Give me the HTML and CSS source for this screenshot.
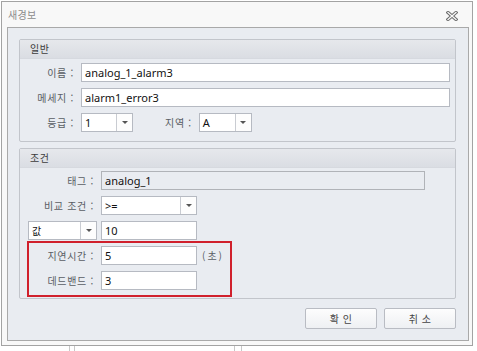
FILE: index.html
```html
<!DOCTYPE html>
<html lang="ko">
<head>
<meta charset="utf-8">
<link rel="stylesheet" href="styles.css">
</head>
<body>
<div class="window">
  <div class="titlebar">
    <span class="title">새경보</span>
    <svg class="close" width="12" height="10" viewBox="0 0 12 10">
      <path d="M2 1.5 L10 8.5 M10 1.5 L2 8.5" stroke="#6a6a6a" stroke-width="3.2" stroke-linecap="square" fill="none"/>
      <path d="M2 1.5 L10 8.5 M10 1.5 L2 8.5" stroke="#f8f8f8" stroke-width="1.3" stroke-linecap="square" fill="none"/>
    </svg>
  </div>
  <div class="panel">
    <section class="group g-general">
      <div class="ghead">일반</div>
      <div class="gbody">
        <div class="row">
          <label class="lbl">이름 :</label>
          <div class="input grow">analog_1_alarm3</div>
        </div>
        <div class="row">
          <label class="lbl">메세지 :</label>
          <div class="input grow">alarm1_error3</div>
        </div>
        <div class="row">
          <label class="lbl">등급 :</label>
          <div class="combo c-grade"><span class="val">1</span><span class="btn"><i class="tri"></i></span></div>
          <label class="lbl2">지역 :</label>
          <div class="combo c-area"><span class="val">A</span><span class="btn"><i class="tri"></i></span></div>
        </div>
      </div>
    </section>
    <section class="group g-cond">
      <div class="ghead">조건</div>
      <div class="gbody">
        <div class="row">
          <label class="lbl">태그 :</label>
          <div class="input disabled w-tag">analog_1</div>
        </div>
        <div class="row">
          <label class="lbl">비교 조건 :</label>
          <div class="combo c-cmp"><span class="val">&gt;=</span><span class="btn"><i class="tri"></i></span></div>
        </div>
        <div class="row">
          <div class="combo c-val"><span class="val kr">값</span><span class="btn"><i class="tri"></i></span></div>
          <div class="input w-num">10</div>
        </div>
        <div class="highlight">
          <div class="row">
            <label class="lbl">지연시간 :</label>
            <div class="input w-num">5</div>
            <span class="unit">(초)</span>
          </div>
          <div class="row">
            <label class="lbl">데드밴드 :</label>
            <div class="input w-num">3</div>
          </div>
        </div>
      </div>
    </section>
    <div class="buttons">
      <button class="button">확 인</button>
      <button class="button">취 소</button>
    </div>
  </div>
</div>
<div class="backdrop">
  <span class="mark m1"></span>
  <span class="mark m2"></span>
</div>
</body>
</html>
```

FILE: styles.css
```css
* { box-sizing: border-box; }
html, body { margin: 0; padding: 0; background: #ffffff; }
body {
  width: 477px;
  height: 351px;
  overflow: hidden;
  font-family: "Noto Sans CJK KR", "Noto Sans", sans-serif;
}

.window {
  margin: 1px 0 0 1px;
  width: 472px;
  height: 345px;
  border: 1px solid #a3a3a3;
  background: #f8f8f8;
  display: flex;
  flex-direction: column;
}

.titlebar {
  height: 25px;
  display: flex;
  align-items: center;
  justify-content: space-between;
  padding: 0 14px 0 6px;
}
.title {
  font-size: 10px;
  color: #8c8c8c;
  line-height: 1;
  letter-spacing: 0.3px;
}
.close { display: block; margin-top: 2px; }

.panel {
  margin: 0 3px 3px 5px;
  height: 314px;
  border: 1px solid #a9a9a9;
  background: #e9ecf1;
  padding: 11px 12px 11px 11px;
  display: flex;
  flex-direction: column;
}

.group {
  border: 1px solid #c2c5cb;
  border-radius: 2px;
  background: #e9ecf1;
}
.g-cond { margin-top: 6px; }

.ghead {
  height: 19px;
  background: linear-gradient(#e6e8ec, #dadde3);
  border-bottom: 1px solid #d6d9df;
  font-size: 10px;
  color: #3c3c3c;
  line-height: 18px;
  padding-left: 10px;
  letter-spacing: 0.5px;
}

.gbody {
  display: flex;
  flex-direction: column;
  gap: 6px;
}
.g-general .gbody { padding: 4px 5px 9px 0; }
.g-cond .gbody { padding: 3px 5px 1px 0; }

.row {
  display: flex;
  align-items: center;
  height: 19px;
  gap: 6px;
}

.lbl, .lbl2 {
  font-size: 10px;
  color: #5a5e64;
  text-align: right;
  white-space: nowrap;
  padding-right: 1px;
  letter-spacing: 0.7px;
}
.g-general .lbl { width: 55px; }
.g-cond .lbl { width: 75px; }
.lbl2 { margin-left: 26px; }

.input {
  height: 19px;
  background: #ffffff;
  border: 1px solid #b6bac2;
  font-family: "Noto Sans", sans-serif;
  font-size: 11px;
  color: #111;
  line-height: 17px;
  padding-left: 3px;
  white-space: nowrap;
}
.grow { flex: 1; }
.disabled { background: #e9ecf1; border-color: #b0b3b8; }
.w-tag { width: 324px; }
.w-num { width: 96px; }

.combo {
  height: 19px;
  display: flex;
  background: #ffffff;
  border: 1px solid #b6bac2;
  font-family: "Noto Sans", sans-serif;
  font-size: 11px;
  color: #111;
}
.combo .val {
  flex: 1;
  line-height: 17px;
  padding-left: 3px;
}
.combo .val.kr { font-family: "Noto Sans CJK KR", sans-serif; font-size: 10px; }
.combo .btn {
  width: 16px;
  border-left: 1px solid #c9ccd2;
  display: flex;
  align-items: center;
  justify-content: center;
  background: #fdfdfd;
}
.tri {
  width: 0;
  height: 0;
  border-left: 3px solid transparent;
  border-right: 3px solid transparent;
  border-top: 3px solid #555;
}
.c-grade { width: 52px; }
.c-area { width: 53px; }
.c-cmp { width: 96px; }
.c-val { width: 69px; margin-left: 8px; margin-right: -2px; }

.highlight {
  margin: -5px 0 0 7px;
  width: 205px;
  border: 2px solid #d0202c;
  padding: 3px 0 5px 0;
  display: flex;
  flex-direction: column;
  gap: 6px;
}
.highlight .row .lbl { width: 66px; }
.unit {
  font-size: 10px;
  color: #5a5e64;
  margin-left: -1px;
  letter-spacing: 2px;
}

.buttons {
  margin-top: 9px;
  display: flex;
  justify-content: flex-end;
  gap: 7px;
}
.button {
  width: 72px;
  height: 21px;
  border: 1px solid #b9bcc3;
  border-radius: 2px;
  background: linear-gradient(#fdfdfd, #eef0f3);
  font-family: "Noto Sans CJK KR", sans-serif;
  font-size: 10px;
  color: #444;
  padding: 0;
  line-height: 19px;
  letter-spacing: 0.5px;
}

.backdrop {
  height: 5px;
  display: flex;
  align-items: flex-end;
}
.mark {
  display: block;
  height: 5px;
  border-left: 1px solid #c8c8c8;
  border-right: 1px solid #c8c8c8;
}
.m1 { width: 6px; margin-left: 69px; }
.m2 { width: 8px; margin-left: 159px; }
```
